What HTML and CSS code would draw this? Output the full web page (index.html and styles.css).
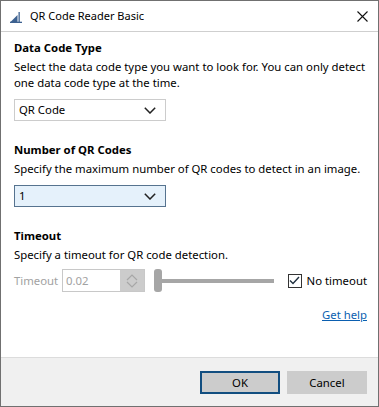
FILE: index.html
```html
<!DOCTYPE html>
<html lang="en">
<head>
<meta charset="utf-8">
<title>QR Code Reader Basic</title>
<link rel="stylesheet" href="styles.css">
</head>
<body>
<div class="window">
  <div class="titlebar">
    <svg class="app-icon" width="12" height="12" viewBox="0 0 12 12" aria-hidden="true">
      <path d="M0 11.5 L7.5 4 L7.5 11.5 Z" fill="#3d6190"/>
      <rect x="8.5" y="1" width="1.3" height="10.5" fill="#3d6190"/>
      <rect x="0" y="10.7" width="12" height="1.3" fill="#3d6190"/>
    </svg>
    <span class="title">QR Code Reader Basic</span>
    <svg class="close" width="11" height="11" viewBox="0 0 11 11" aria-hidden="true">
      <path d="M0.5 0.5 L10.5 10.5 M10.5 0.5 L0.5 10.5" stroke="#111" stroke-width="1.1" fill="none"/>
    </svg>
  </div>

  <div class="content">
    <section class="group">
      <h2 class="heading">Data Code Type</h2>
      <p class="desc">Select the data code type you want to look for. You can only detect<br>one data code type at the time.</p>
      <div class="combo">
        <span class="combo-value">QR Code</span>
        <svg class="chevron" width="12" height="7" viewBox="0 0 12 7"><path d="M0.8 0.8 L6 6 L11.2 0.8" stroke="#222" stroke-width="1.5" fill="none"/></svg>
      </div>
    </section>

    <section class="group">
      <h2 class="heading">Number of QR Codes</h2>
      <p class="desc">Specify the maximum number of QR codes to detect in an image.</p>
      <div class="combo combo-hover">
        <span class="combo-value">1</span>
        <svg class="chevron" width="12" height="7" viewBox="0 0 12 7"><path d="M0.8 0.8 L6 6 L11.2 0.8" stroke="#222" stroke-width="1.5" fill="none"/></svg>
      </div>
    </section>

    <section class="group">
      <h2 class="heading">Timeout</h2>
      <p class="desc">Specify a timeout for QR code detection.</p>
      <div class="timeout-row">
        <span class="label-disabled">Timeout</span>
        <div class="spin">
          <span class="spin-value">0.02</span>
          <div class="spin-btn">
            <svg width="12" height="16" viewBox="0 0 12 16"><path d="M1 7 L6 2 L11 7 M1 9 L6 14 L11 9" stroke="#a7a7a7" stroke-width="1.2" fill="none"/></svg>
          </div>
        </div>
        <div class="slider">
          <div class="slider-thumb"></div>
          <div class="slider-track"></div>
        </div>
        <label class="check">
          <span class="check-box">
            <svg width="11" height="9" viewBox="0 0 11 9"><path d="M1 4.5 L4 7.5 L10 1" stroke="#1f2f3f" stroke-width="1.4" fill="none"/></svg>
          </span>
          <span>No timeout</span>
        </label>
      </div>
    </section>

    <div class="help-row"><a class="help" href="#">Get help</a></div>
  </div>

  <div class="footer">
    <button class="btn btn-default" type="button">OK</button>
    <button class="btn" type="button">Cancel</button>
  </div>
</div>
</body>
</html>
```

FILE: styles.css
```css
* { box-sizing: border-box; }
html, body { margin: 0; padding: 0; background: #fff; }
body {
  font-family: "Noto Sans", "Segoe UI", sans-serif;
  font-size: 11.35px;
  color: #000;
}
.window {
  width: 379px;
  height: 407px;
  border: 1px solid #707070;
  display: flex;
  flex-direction: column;
  background: #fff;
}
.titlebar {
  height: 31px;
  flex: none;
  display: flex;
  align-items: center;
  padding: 0 10px 0 9px;
  border-bottom: 1px solid #cfcfcf;
}
.app-icon { flex: none; margin-top: 2px; }
.title { margin-left: 8px; flex: 1; line-height: 16px; font-size: 11px; }
.close { flex: none; }

.content {
  flex: 1;
  padding: 8px 11px 0 13px;
  display: flex;
  flex-direction: column;
}
.group + .group { margin-top: 21px; }
.heading {
  margin: 0;
  font-size: 11.35px;
  font-weight: 700;
  line-height: 16px;
}
.desc {
  margin: 3px 0 0;
  line-height: 16px;
  white-space: nowrap;
}
.combo {
  margin-top: 8px;
  width: 152px;
  height: 22px;
  border: 1px solid #cccccc;
  background: #fff;
  display: flex;
  align-items: center;
  padding: 0 9px 0 4px;
}
.combo-hover { background: #e5f1fb; border-color: #56738f; }
.combo-value { flex: 1; line-height: 16px; }
.chevron { flex: none; }

.timeout-row {
  margin-top: 6px;
  height: 23px;
  display: flex;
  align-items: center;
}
.label-disabled { color: #a2a2a2; width: 48px; }
.spin {
  width: 83px;
  height: 23px;
  border: 1px solid #c8c8c8;
  display: flex;
  align-items: stretch;
}
.spin-value { flex: 1; color: #a2a2a2; padding-left: 3px; line-height: 21px; }
.spin-btn {
  width: 24px;
  background: #cccccc;
  display: flex;
  align-items: center;
  justify-content: center;
}
.slider {
  margin-left: 9px;
  width: 120px;
  height: 23px;
  display: flex;
  align-items: center;
}
.slider-thumb {
  width: 8px;
  height: 23px;
  border-radius: 3px;
  background: #a6a6a6;
  flex: none;
}
.slider-track {
  flex: 1;
  height: 4px;
  background: #a6a6a6;
}
.check {
  margin-left: auto;
  display: flex;
  align-items: center;
  gap: 5px;
}
.check-box {
  width: 14px;
  height: 14px;
  border: 1px solid #333;
  display: flex;
  align-items: center;
  justify-content: center;
  background: #fff;
}
.help-row {
  margin-top: 15px;
  display: flex;
  justify-content: flex-end;
  line-height: 16px;
}
.help { color: #0b5fb0; text-decoration: underline; }

.footer {
  height: 49px;
  flex: none;
  background: #f0f0f0;
  border-top: 1px solid #dcdcdc;
  display: flex;
  align-items: center;
  justify-content: flex-end;
  gap: 7px;
  padding: 0 11px 0 0;
}
.btn {
  width: 80px;
  height: 23px;
  font: inherit;
  background: #cccccc;
  border: 1px solid #cccccc;
  color: #000;
  padding: 0;
}
.btn-default { border: 2px solid #124e80; }
```
